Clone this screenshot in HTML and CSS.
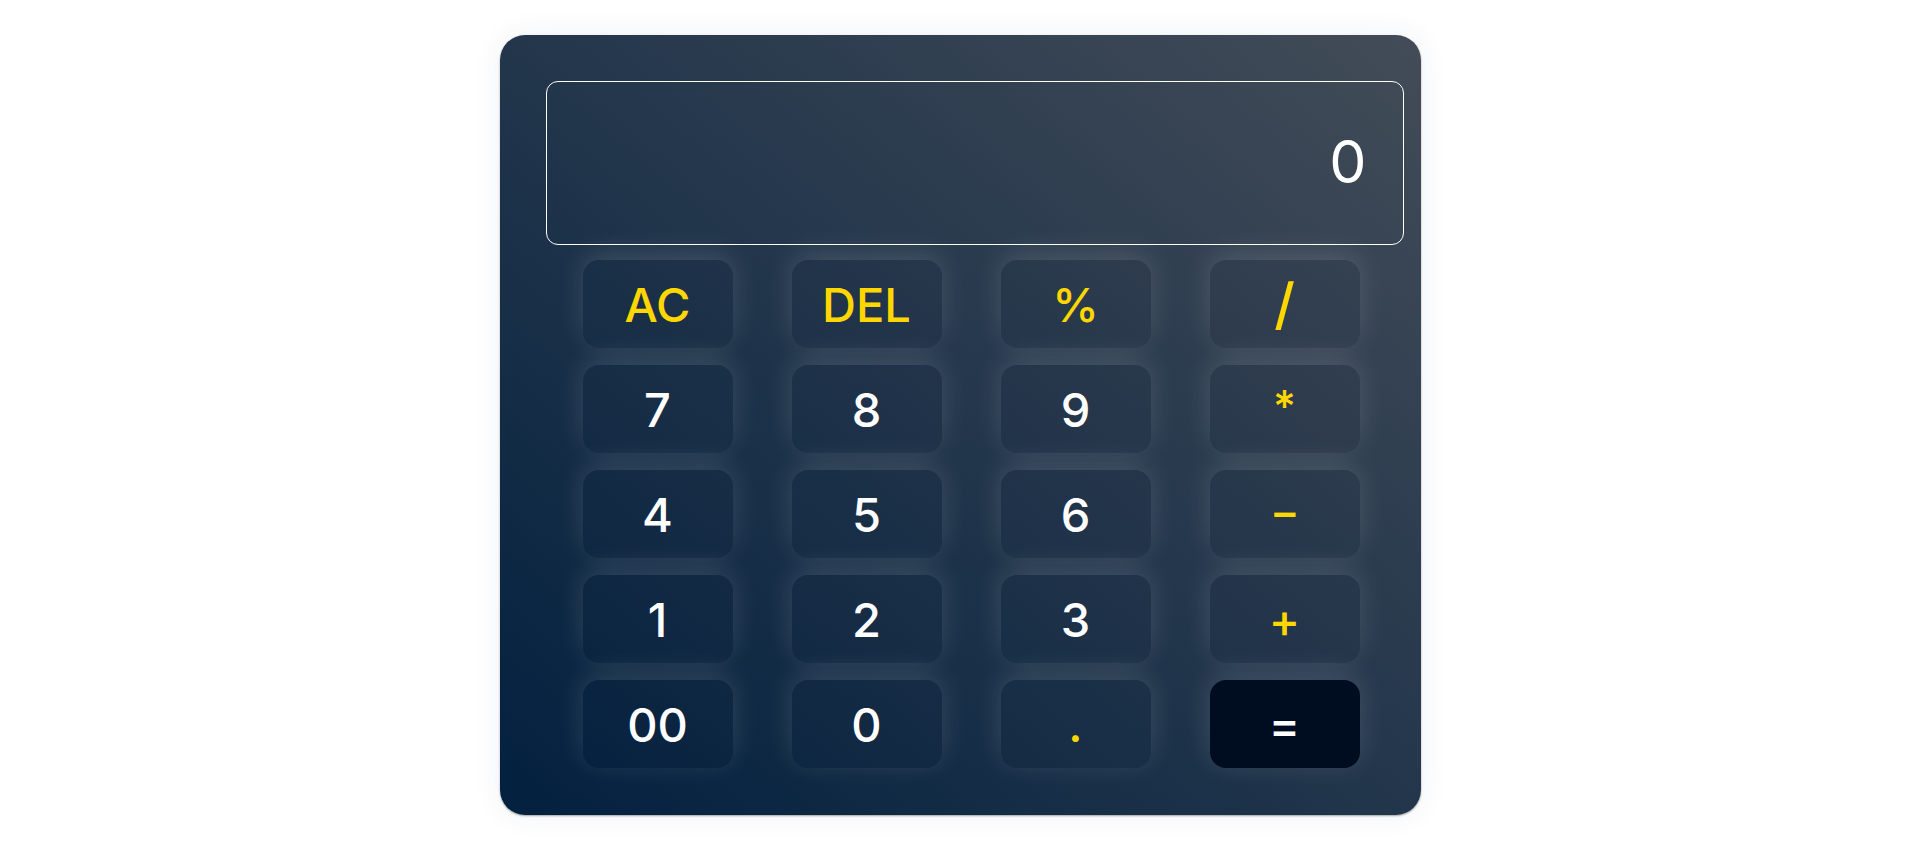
FILE: index.html
```html
<!DOCTYPE html>
<html lang="en">
<head>
<meta charset="utf-8">
<title>Calculator</title>
<link rel="stylesheet" href="styles.css">
</head>
<body>
<div class="calculator">
  <div class="display">0</div>
  <div class="keys">
    <button class="key op">AC</button>
    <button class="key op">DEL</button>
    <button class="key op">%</button>
    <button class="key op slash">/</button>
    <button class="key">7</button>
    <button class="key">8</button>
    <button class="key">9</button>
    <button class="key op star">*</button>
    <button class="key">4</button>
    <button class="key">5</button>
    <button class="key">6</button>
    <button class="key op minus-key"><span class="minus">-</span></button>
    <button class="key">1</button>
    <button class="key">2</button>
    <button class="key">3</button>
    <button class="key op">+</button>
    <button class="key">00</button>
    <button class="key">0</button>
    <button class="key op">.</button>
    <button class="key equal">=</button>
  </div>
</div>
</body>
</html>
```
FILE: styles.css
```css
* { box-sizing: border-box; }
html, body { margin: 0; padding: 0; }
body {
  background: #ffffff;
  font-family: "Inter", "Open Sans", sans-serif;
  height: 846px;
  overflow: hidden;
}
.calculator {
  width: 921px;
  height: 780px;
  margin: 35px auto 0;
  padding: 46px 0 0 46px;
  border-radius: 25px;
  background: linear-gradient(to top right, #02203f 0%, #434c58 100%);
  box-shadow: 0 1px 2px rgba(0, 0, 0, 0.35), 0 0 30px rgba(40, 60, 120, 0.07);
}
.display {
  width: 858px;
  height: 164px;
  border: 1px solid #ffffff;
  border-radius: 12px;
  display: flex;
  align-items: center;
  justify-content: flex-end;
  padding: 0 36px 4px 0;
  color: #ffffff;
  font-size: 59px;
  font-weight: 400;
}
.keys {
  margin-top: 15px;
  padding-left: 37px;
  display: grid;
  grid-template-columns: repeat(4, 150px);
  grid-auto-rows: 88px;
  column-gap: 59px;
  row-gap: 17px;
}
.key {
  border: none;
  outline: none;
  border-radius: 16px;
  background: rgba(0, 8, 25, 0.04);
  color: #ffffff;
  font-family: inherit;
  font-size: 47px;
  font-weight: 500;
  padding: 0;
  box-shadow: 0 -6px 28px rgba(255, 255, 255, 0.14);
  display: flex;
  align-items: center;
  justify-content: center;
}
.op { color: #ffd700; }
.slash { font-size: 56px; }
.star { font-size: 44px; padding-bottom: 6px; }
.minus-key { padding-bottom: 6px; }
.minus {
  display: inline-block;
  transform: scaleX(1.4);
}
.equal {
  background: #000c1f;
  color: #ffffff;
}
```
